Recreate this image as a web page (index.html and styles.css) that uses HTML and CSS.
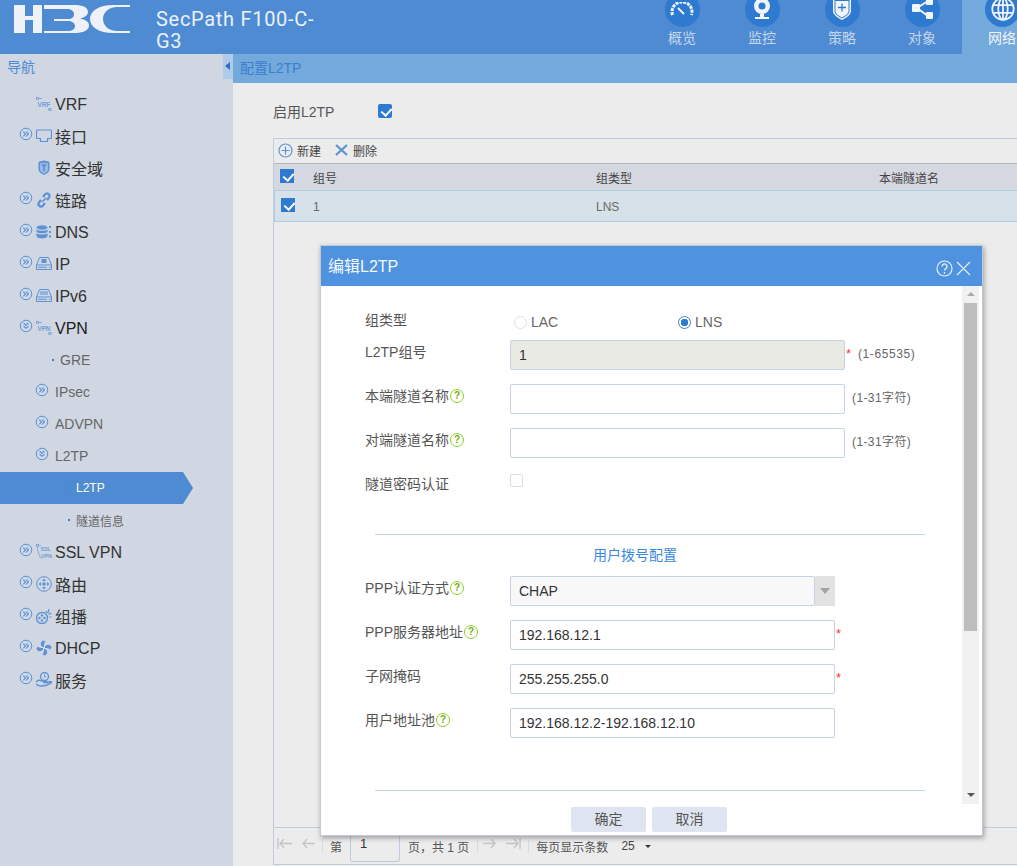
FILE: index.html
```html
<!DOCTYPE html>
<html lang="zh">
<head>
<meta charset="utf-8">
<title>编辑L2TP</title>
<link rel="stylesheet" href="styles.css">
</head>
<body>
<svg class="sprites" width="0" height="0" aria-hidden="true">
  <defs>
    <symbol id="chev-r" viewBox="0 0 14 14"><circle cx="7" cy="7" r="5.8" fill="none" stroke="#5d93d6"/><path d="M4.300 4.600 6.600 7 4.300 9.400M7.200 4.600 9.500 7 7.200 9.400" fill="none" stroke="#5d93d6" stroke-width="1.100"/></symbol>
    <symbol id="chev-d" viewBox="0 0 14 14"><circle cx="7" cy="7" r="5.8" fill="none" stroke="#5d93d6"/><path d="M4.600 4 7 6.300 9.400 4M4.600 7 7 9.300 9.400 7" fill="none" stroke="#5d93d6" stroke-width="1.100"/></symbol>
  </defs>
</svg>
<div class="app">
  <header class="topbar">
    <div class="logo">
      <svg width="116" height="28" viewBox="0 0 116 28"><g fill="#eef2f8">
        <path d="M0 0h11v11h8V0h9v28h-9V15h-8v13H0z"/>
        <path d="M30 0h30c9 0 14 2.500 14 7 0 3-3 5.500-8 6.500 5 1 9 3 9 7 0 5-6 7.500-15 7.500H30v-2h24c4 0 7-2 7-5s-3-5-7-5H40v-2h14c4 0 6-2 6-5s-3-5-7-5H30z"/>
        <path d="M116 0v2h-13c-8 0-14 5-14 12s6 12 14 12h13v2H99c-14 0-23-6-23-14S85 0 99 0z"/>
      </g></svg>
    </div>
    <div class="product"><span class="product-line">SecPath F100-C-</span><span class="product-line">G3</span></div>
    <nav class="mainnav">
      <div class="navitem"><span class="navcircle"><svg width="24" height="14" viewBox="0 0 24 14"><path d="M2.500 13a10 10 0 1 1 19 0" fill="none" stroke="#f1f5fa" stroke-width="3" stroke-dasharray="3 1"/><path d="M8 6l6 6" stroke="#f1f5fa" stroke-width="2"/></svg></span><span class="navlabel">概览</span></div>
      <div class="navitem"><span class="navcircle"><svg width="18" height="21" viewBox="0 0 18 21"><circle cx="9" cy="7" r="8" fill="#f1f5fa"/><circle cx="9" cy="7" r="3.500" fill="#2f7ad1"/><path d="M7 15h4v3H7zM2 18h14v2H2z" fill="#f1f5fa"/></svg></span><span class="navlabel">监控</span></div>
      <div class="navitem"><span class="navcircle"><svg width="18" height="23" viewBox="0 0 18 23"><path d="M0 0h18v13c0 4-5 7-9 9-4-2-9-5-9-9z" fill="#f1f5fa"/><path d="M1.500 2h15v11c0 3-4 5.500-7.500 7.500C5.500 18.500 1.500 16 1.500 13z" fill="#2f7ad1"/><path d="M2.500 3h13v10c0 3-3 4.500-6.500 6.500C5.500 17.500 2.500 16 2.500 13z" fill="#f1f5fa"/><path d="M9 5.500v8M5 9.500h8" stroke="#2f7ad1" stroke-width="1.300"/></svg></span><span class="navlabel">策略</span></div>
      <div class="navitem"><span class="navcircle"><svg width="21" height="22" viewBox="0 0 21 22"><path d="M16 3 5 10l11 8" fill="none" stroke="#f1f5fa" stroke-width="2"/><rect x="0" y="6" width="8" height="8" rx="1" fill="#f1f5fa"/><rect x="14" y="0" width="7" height="7" rx="1" fill="#f1f5fa"/><rect x="14" y="14" width="7" height="7" rx="1" fill="#f1f5fa"/></svg></span><span class="navlabel">对象</span></div>
      <div class="navitem navitem-active"><span class="navcircle"><svg width="24" height="24" viewBox="0 0 28 28"><g fill="none" stroke="#f1f5fa" stroke-width="2"><circle cx="14" cy="14" r="12.500"/><ellipse cx="14" cy="14" rx="5.500" ry="12.500"/><path d="M3 9.500h22M3 18.500h22M14 2v24"/></g></svg></span><span class="navlabel">网络</span></div>
    </nav>
  </header>
  <div class="body">
    <aside class="sidebar">
      <div class="sidehead"><span class="sidetitle">导航</span><span class="collapse"></span></div>
      <ul class="tree">
        <li class="row"><span class="exp"></span><svg class="ico" width="16" height="14" viewBox="0 0 16 14"><g fill="none" stroke="#6f9fd8" stroke-width=".8"><rect x="0.500" y="0.500" width="2" height="2"/><path d="M2.500 1.500H6M12 12.500h1"/><rect x="13" y="11.500" width="2" height="2"/></g><text class="icotext" x="1.500" y="10">VRF</text></svg><span class="lvl1">VRF</span></li>
        <li class="row"><svg class="exp" viewBox="0 0 14 14"><use href="#chev-r"/></svg><svg class="ico" width="16" height="14" viewBox="0 0 16 14"><path d="M1.500 1h13a1 1 0 0 1 1 1v6.500a1 1 0 0 1-1 1H11.500v3H4.500v-3H1.500a1 1 0 0 1-1-1V2a1 1 0 0 1 1-1z" fill="none" stroke="#5d93d6" stroke-width="1.200"/></svg><span class="lvl1 cn">接口</span></li>
        <li class="row"><span class="exp"></span><svg class="ico" width="16" height="16" viewBox="0 0 16 16"><path d="M2.500 2q5.500-3 11 0v7c0 3-3 5-5.500 6-2.500-1-5.500-3-5.500-6z" fill="#5d93d6"/><path d="M4 3.500q4-1.500 8 0v5.500c0 2-2 3.500-4 4.500-2-1-4-2.500-4-4.500z" fill="#9cbde6"/><path d="M5.500 4.500h5v1.300H8.700v5.500H7.300V5.800H5.500z" fill="#4f85c9"/></svg><span class="lvl1 cn">安全域</span></li>
        <li class="row"><svg class="exp" viewBox="0 0 14 14"><use href="#chev-r"/></svg><svg class="ico" width="16" height="16" viewBox="0 0 16 16"><g fill="none" stroke="#5d93d6" stroke-width="2.200"><path d="M7 5l2-2.500a2.500 2.500 0 0 1 4 3L11 8"/><path d="M9 11l-2 2.500a2.500 2.500 0 0 1-4-3L5 8"/><path d="M6 10l4-4" stroke-width="1.600"/></g></svg><span class="lvl1 cn">链路</span></li>
        <li class="row"><svg class="exp" viewBox="0 0 14 14"><use href="#chev-r"/></svg><svg class="ico" width="16" height="14" viewBox="0 0 16 14"><g fill="#5d93d6"><ellipse cx="6" cy="2.500" rx="5.500" ry="2.200"/><path d="M.5 4.300c2 2 9 2 11 0v2.400c-2 2-9 2-11 0zM.5 8c2 2 9 2 11 0v3.500c-2 2.500-9 2.500-11 0z"/><path d="M13 1h2v2h-2zM13 6h2v2h-2zM13 10.500h2v2h-2z"/></g></svg><span class="lvl1">DNS</span></li>
        <li class="row"><svg class="exp" viewBox="0 0 14 14"><use href="#chev-r"/></svg><svg class="ico" width="16" height="13" viewBox="0 0 16 13"><path d="M3.500.5h9L15.500 8v4.500H.5V8z" fill="none" stroke="#5d93d6"/><path d="M.5 8h15M2 10.300h9M13 10.300h1.500" stroke="#5d93d6"/><path d="M5.500 2h5v4h-5z" fill="#5d93d6"/></svg><span class="lvl1">IP</span></li>
        <li class="row"><svg class="exp" viewBox="0 0 14 14"><use href="#chev-r"/></svg><svg class="ico" width="16" height="13" viewBox="0 0 16 13"><path d="M3.500.5h9L15.500 8v4.500H.5V8z" fill="none" stroke="#5d93d6"/><path d="M.5 8h15M2 10.300h9M13 10.300h1.500" stroke="#5d93d6"/><path d="M4 2h8v4H4z" fill="#8fb4e2"/></svg><span class="lvl1">IPv6</span></li>
        <li class="row"><svg class="exp" viewBox="0 0 14 14"><use href="#chev-d"/></svg><svg class="ico" width="16" height="14" viewBox="0 0 16 14"><g fill="none" stroke="#6f9fd8" stroke-width=".8"><rect x="0.500" y="0.500" width="2" height="2"/><path d="M2.500 1.500H6M12 12.500h1"/><rect x="13" y="11.500" width="2" height="2"/></g><text class="icotext" x="1.500" y="10">VPN</text></svg><span class="lvl1 dark">VPN</span></li>
        <li class="row sub"><span class="dot"></span><span class="lvl2">GRE</span></li>
        <li class="row sub2"><svg class="exp" viewBox="0 0 14 14"><use href="#chev-r"/></svg><span class="lvl2">IPsec</span></li>
        <li class="row sub2"><svg class="exp" viewBox="0 0 14 14"><use href="#chev-r"/></svg><span class="lvl2">ADVPN</span></li>
        <li class="row sub2"><svg class="exp" viewBox="0 0 14 14"><use href="#chev-d"/></svg><span class="lvl2">L2TP</span></li>
        <li class="row sub3 current"><span class="dot"></span><span class="lvl3">L2TP</span></li>
        <li class="row sub3"><span class="dot"></span><span class="lvl3">隧道信息</span></li>
        <li class="row"><svg class="exp" viewBox="0 0 14 14"><use href="#chev-r"/></svg><svg class="ico" width="16" height="16" viewBox="0 0 16 16"><g fill="none" stroke="#6f9fd8" stroke-width=".8"><rect x="0.500" y="0.500" width="2" height="2"/><path d="M2.500 1.500H5M1.500 3v3l3 8h1"/></g><text class="icotext icotext-small" x="4.500" y="7">SSL</text><text class="icotext icotext-small" x="5" y="13.500">VPN</text></svg><span class="lvl1">SSL VPN</span></li>
        <li class="row"><svg class="exp" viewBox="0 0 14 14"><use href="#chev-r"/></svg><svg class="ico" width="16" height="16" viewBox="0 0 16 16"><circle cx="8" cy="8" r="7.300" fill="none" stroke="#5d93d6"/><path d="M8 2.500 10 5H6zM8 13.500 6 11h4zM2.500 8 5 6v4zM13.500 8 11 10V6z" fill="#5d93d6"/><circle cx="8" cy="8" r="1.800" fill="#5d93d6"/></svg><span class="lvl1 cn">路由</span></li>
        <li class="row"><svg class="exp" viewBox="0 0 14 14"><use href="#chev-r"/></svg><svg class="ico" width="16" height="16" viewBox="0 0 16 16"><circle cx="6" cy="10" r="5.500" fill="none" stroke="#5d93d6" stroke-width="1.400"/><g fill="#5d93d6"><circle cx="6" cy="7.500" r="1.200"/><circle cx="6" cy="12.500" r="1.200"/><circle cx="3.500" cy="10" r="1.200"/><circle cx="8.500" cy="10" r="1.200"/></g><path d="M10 3l1 2M13 1l-1 4M15.500 5l-3 1.500M15.500 9h-2" stroke="#5d93d6" stroke-width="1.200"/></svg><span class="lvl1 cn">组播</span></li>
        <li class="row"><svg class="exp" viewBox="0 0 14 14"><use href="#chev-r"/></svg><svg class="ico" width="16" height="16" viewBox="0 0 16 16"><path d="M7 7C4 6 4 2 7 .5l2.500 1C8 3 8 5 8 7zM9 7c1-3 5-3 6.500 0l-1 2.500C13 8 11 8 9 8zM9 9c3 1 3 5 0 6.500l-2.500-1C8 13 8 11 8 9zM7 9c-1 3-5 3-6.500 0l1-2.500C3 8 5 8 7 8z" fill="#5d93d6"/></svg><span class="lvl1">DHCP</span></li>
        <li class="row"><svg class="exp" viewBox="0 0 14 14"><use href="#chev-r"/></svg><svg class="ico" width="16" height="15" viewBox="0 0 16 15"><circle cx="8.500" cy="4.500" r="4" fill="none" stroke="#5d93d6" stroke-width="1.300"/><path d="M8.500 2.500v2.200h1.500" fill="none" stroke="#5d93d6"/><path d="M0 10c2-2 4-2 6-1h4c1 0 1 1.500 0 1.500H7M0 12c4 3 9 3 16-2-2-.5-4 0-6 1" fill="none" stroke="#5d93d6" stroke-width="1.500"/></svg><span class="lvl1 cn">服务</span></li>
      </ul>
    </aside>
    <main class="main">
      <div class="crumb">配置L2TP</div>
      <div class="content">
        <div class="enable"><span class="enable-label">启用L2TP</span><span class="check"></span></div>
        <section class="grid">
          <div class="toolbar">
            <span class="tool"><svg width="15" height="15" viewBox="0 0 15 15"><circle cx="7.500" cy="7.500" r="6.500" fill="none" stroke="#5d93d6" stroke-width="1.200"/><path d="M7.500 3.500v8M3.500 7.500h8" stroke="#5d93d6" stroke-width="1.200"/></svg>新建</span>
            <span class="tool"><svg width="15" height="14" viewBox="0 0 15 14"><path d="M2 2l11 10M13 2 2 12" stroke="#5d93d6" stroke-width="2.300"/></svg>删除</span>
          </div>
          <div class="grid-head">
            <span class="cell-check"><span class="check check-square"></span></span>
            <span class="col1">组号</span><span class="col2">组类型</span><span class="col3">本端隧道名</span>
          </div>
          <div class="grid-row">
            <span class="cell-check"><span class="check check-square"></span></span>
            <span class="col1">1</span><span class="col2">LNS</span><span class="col3"></span>
          </div>
          <div class="grid-fill"></div>
          <div class="pager">
            <svg class="pg-ico" width="16" height="11" viewBox="0 0 16 11"><path d="M1 0v11M15 5.500H3M7 1 3 5.500 7 10" fill="none" stroke="#c4c4c4" stroke-width="1.300"/></svg>
            <svg class="pg-ico" width="14" height="11" viewBox="0 0 14 11"><path d="M14 5.500H2M6 1 2 5.500 6 10" fill="none" stroke="#c4c4c4" stroke-width="1.300"/></svg>
            <span class="pg-sep"></span>
            <span class="pg-text">第</span>
            <span class="pg-input">1</span>
            <span class="pg-text pg-total">页，共 1 页</span>
            <span class="pg-sep"></span>
            <svg class="pg-ico pg-next" width="14" height="11" viewBox="0 0 14 11"><path d="M0 5.500H12M8 1l4 4.500L8 10" fill="none" stroke="#c4c4c4" stroke-width="1.300"/></svg>
            <svg class="pg-ico" width="16" height="11" viewBox="0 0 16 11"><path d="M15 0v11M1 5.500H13M9 1l4 4.500L9 10" fill="none" stroke="#c4c4c4" stroke-width="1.300"/></svg>
            <span class="pg-sep"></span>
            <span class="pg-text">每页显示条数</span>
            <span class="pg-size">25</span>
            <span class="pg-caret"></span>
          </div>
        </section>
      </div>
    </main>
  </div>
</div>

<div class="dialog">
  <div class="dlg-head">
    <span>编辑L2TP</span>
    <span class="dlg-icons">
      <svg width="17" height="17" viewBox="0 0 17 17"><circle cx="8.500" cy="8.500" r="7.500" fill="none" stroke="#e9f1fb" stroke-width="1.200"/><path d="M6 6.500a2.500 2.500 0 1 1 3.800 2.100c-.9.500-1.300 1-1.300 2" fill="none" stroke="#e9f1fb" stroke-width="1.300"/><circle cx="8.500" cy="12.800" r=".9" fill="#e9f1fb"/></svg>
      <svg width="15" height="15" viewBox="0 0 15 15"><path d="M1 1l13 13M14 1 1 14" stroke="#e9f1fb" stroke-width="1.100"/></svg>
    </span>
  </div>
  <div class="dlg-body">
    <div class="dlg-form">
      <div class="frow frow-radio"><label class="flabel">组类型</label>
        <div class="radios"><span class="radio-item radio-lac"><span class="radio"></span>LAC</span><span class="radio-item"><span class="radio radio-on"></span>LNS</span></div>
      </div>
      <div class="frow"><label class="flabel">L2TP组号</label><span class="input input-wide input-disabled">1</span><span class="req">*</span><span class="hint hint-req">(1-65535)</span></div>
      <div class="frow"><label class="flabel">本端隧道名称<span class="help">?</span></label><span class="input input-wide"></span><span class="hint">(1-31字符)</span></div>
      <div class="frow"><label class="flabel">对端隧道名称<span class="help">?</span></label><span class="input input-wide"></span><span class="hint">(1-31字符)</span></div>
      <div class="frow frow-check"><label class="flabel">隧道密码认证</label><span class="check-off"></span></div>
      <hr class="rule">
      <div class="section-title">用户拨号配置</div>
      <div class="frow"><label class="flabel">PPP认证方式<span class="help">?</span></label><span class="input input-select">CHAP</span><span class="select-btn"><span class="select-caret"></span></span></div>
      <div class="frow"><label class="flabel">PPP服务器地址<span class="help">?</span></label><span class="input">192.168.12.1</span><span class="req">*</span></div>
      <div class="frow"><label class="flabel">子网掩码</label><span class="input">255.255.255.0</span><span class="req">*</span></div>
      <div class="frow"><label class="flabel">用户地址池<span class="help">?</span></label><span class="input">192.168.12.2-192.168.12.10</span></div>
      <hr class="rule rule-bottom">
    </div>
    <div class="scrollbar">
      <span class="sb-arrow sb-up"></span>
      <span class="sb-thumb"></span>
      <span class="sb-arrow sb-down"></span>
    </div>
  </div>
  <div class="dlg-foot"><span class="btn">确定</span><span class="btn">取消</span></div>
</div>
</body>
</html>
```
FILE: styles.css
```css
* { box-sizing: border-box; }
html, body { margin: 0; padding: 0; height: 100%; overflow: hidden; }
body { font-family: "Liberation Sans", "Noto Sans CJK SC", sans-serif; font-size: 13px; color: #555; background: #ececec; }
.sprites { position: absolute; }
.app { width: 1017px; height: 866px; display: flex; flex-direction: column; }

.topbar { height: 54px; flex: none; display: flex; background: #4f8bd2; color: #fff; overflow: hidden; }
.logo { width: 156px; padding: 5px 0 0 14px; }
.product { width: 190px; padding-top: 8px; font-family: "Roboto", "Open Sans", sans-serif; font-size: 20px; line-height: 22px; letter-spacing: .7px; color: #eaf1fa; white-space: nowrap; }
.product-line { display: block; height: 22px; }
.mainnav { margin-left: auto; display: flex; }
.navitem { width: 80px; display: flex; flex-direction: column; align-items: center; }
.navitem-active { width: 55px; background: #74a9dc; align-items: flex-start; padding-left: 23px; }
.navitem-active .navlabel { margin-left: 3px; color: #f0f5fb; }
.navcircle { width: 35px; height: 35px; margin-top: -8px; flex: none; border-radius: 50%; background: #2f7ad1; display: flex; align-items: center; justify-content: center; padding-bottom: 1px; }
.navlabel { margin-top: 1px; font-size: 14px; line-height: 20px; color: #c4d6ee; white-space: nowrap; }

.body { flex: 1; display: flex; min-height: 0; }
.sidebar { width: 233px; flex: none; background: #d0d7e2; }
.sidehead { height: 29px; display: flex; justify-content: space-between; align-items: flex-start; padding-left: 7px; font-size: 14px; color: #4b8bd6; }
.sidetitle { line-height: 26px; }
.collapse { width: 10px; height: 25px; background: #b0cbe9; position: relative; }
.collapse::after { content: ""; position: absolute; left: 2px; top: 8px; border: 4px solid transparent; border-left: 0; border-right: 5px solid #2f6fc0; }
.tree { list-style: none; margin: 0; padding: 5px 0 0; }
.row { height: 32px; display: flex; align-items: center; padding: 2px 0 0 19px; font-size: 16px; color: #333; position: relative; }
.exp { width: 14px; height: 14px; flex: none; margin-top: -6px; }
.ico { margin-left: 3px; flex: none; width: 16px; margin-top: -3px; }
.icotext { font-size: 6.500px; font-weight: bold; letter-spacing: -.2px; fill: #6f9fd8; }
.icotext-small { font-size: 5.500px; }
.lvl1 { margin-left: 3px; white-space: nowrap; }
.cn { margin-top: -2px; }
.dark { color: #222; }
.row.sub { padding: 0 0 0 52px; }
.row.sub2 { padding: 0 0 0 35px; }
.sub2 .exp { margin-top: -4px; }
.row.sub3 { padding: 0 0 0 68px; }
.dot { width: 2px; height: 2px; background: #3f82d2; flex: none; }
.lvl2 { margin-left: 6px; font-size: 14px; color: #666; }
.lvl3 { margin-left: 6px; font-size: 12px; color: #666; }
.current { background: #4f8bd2; width: 193px; clip-path: polygon(0 0, 183px 0, 193px 50%, 183px 100%, 0 100%); }
.current .lvl3 { color: #fff; }

.main { flex: 1; min-width: 0; display: flex; flex-direction: column; }
.crumb { height: 29px; flex: none; padding-left: 7px; line-height: 29px; font-size: 14px; color: #3a7fd0; background: #74a9dc; }
.content { flex: 1; padding: 0 0 0 40px; display: flex; flex-direction: column; min-height: 0; }
.enable { height: 55px; flex: none; display: flex; align-items: center; }
.enable-label { width: 105px; font-size: 14px; color: #555; }
.check { display: inline-block; width: 14px; height: 14px; border-radius: 2px; background: #2f7ad1; position: relative; }
.check-square { border-radius: 0; margin-top: -2px; }
.grid-row .check-square { margin-top: -4px; }
.check::after { content: ""; position: absolute; left: 4.500px; top: 2px; width: 5px; height: 8px; border: solid #fff; border-width: 0 2px 2px 0; transform: rotate(42deg); }

.grid { flex: 1; margin-bottom: 1px; display: flex; flex-direction: column; border: 1px solid #bfcbe0; border-right: 0; min-height: 0; }
.toolbar { height: 24px; flex: none; display: flex; align-items: center; gap: 13px; padding: 0 0 2px 4px; font-size: 12px; color: #444; }
.tool { display: flex; align-items: center; gap: 4px; }
.grid-head, .grid-row { flex: none; display: flex; align-items: center; font-size: 12px; }
.grid-head { height: 27px; background: #d5d8e0; color: #444; border-top: 1px solid #b4b4b4; }
.grid-row { height: 32px; padding-top: 2px; background: #d6e1e9; border: 1px solid #b0cbe3; border-right: 0; color: #6a6a62; }
.cell-check { width: 39px; padding-left: 6px; display: flex; flex: none; }
.grid-row .cell-check { width: 38px; }
.col1 { width: 283px; flex: none; }
.col2 { width: 283px; flex: none; }
.col3 { flex: 1; }
.grid-fill { flex: 1; }
.pager { height: 37px; flex: none; display: flex; align-items: center; padding-left: 3px; border-top: 1px solid #bfcbe0; font-size: 12px; color: #555; }
.pg-ico { margin: -6px 8px 0 0; flex: none; }
.pg-next { margin-left: -2px; }
.pg-sep { width: 1px; height: 14px; background: #dcdcdc; margin: 0 7px 0 -1px; flex: none; }
.pg-text { white-space: nowrap; }
.pg-input { width: 50px; height: 33px; margin: -1px 0 0 8px; padding: 0 0 0 9px; line-height: 30px; border: 1px solid #bfcbe0; border-top: 0; border-radius: 0 0 3px 3px; font-size: 13px; color: #333; }
.pg-total { margin-left: 8px; margin-right: 9px; }
.pg-size { margin-left: 13px; color: #444; }
.pg-caret { margin-left: 10px; border: 3px solid transparent; border-top: 3px solid #333; border-bottom: 0; }

.dialog { position: absolute; left: 320px; top: 245px; width: 663px; height: 591px; display: flex; flex-direction: column; background: #fff; border: 1px solid #c5c9d2; box-shadow: 1px 2px 5px rgba(60,60,70,.45); }
.dlg-head { height: 40px; flex: none; display: flex; justify-content: space-between; align-items: center; padding: 0 11px 2px 7px; background: #4f92e0; color: #f4f8fd; font-size: 16px; }
.dlg-icons { display: flex; align-items: center; gap: 3px; margin-top: 6px; }
.dlg-body { flex: 1; display: flex; min-height: 0; position: relative; }
.dlg-form { flex: 1; padding: 0 38px 0 44px; min-width: 0; }
.frow { height: 44px; display: flex; align-items: flex-start; }
.frow-radio { height: 54px; padding-top: 22px; }
.flabel { width: 145px; flex: none; font-size: 14px; line-height: 18px; margin-top: 3px; color: #555; display: flex; align-items: center; white-space: nowrap; }
.radios { display: flex; font-size: 14px; color: #666; margin-top: 5px; }
.radio-item { display: flex; align-items: center; white-space: nowrap; line-height: 18px; }
.radio-lac { width: 164px; margin-left: 4px; }
.radio { width: 13px; height: 13px; margin-right: 4px; border-radius: 50%; border: 1px solid #e0e0e0; background: #fff; }
.radio-on { border-color: #3a7fd0; background: radial-gradient(circle, #2f7ad1 0 3.500px, #fff 4px); }
.input { width: 325px; height: 30px; flex: none; padding-left: 8px; border: 1px solid #c4d3e6; border-radius: 2px; font-size: 14px; line-height: 28px; color: #333; background: #fff; }
.input-wide { width: 335px; }
.input-disabled { background: #eaeae4; }
.req { width: 5px; margin-left: 1px; color: #f33; font-size: 13px; line-height: 28px; flex: none; }
.hint { margin-left: 7px; font-size: 12px; letter-spacing: .4px; line-height: 28px; color: #666; white-space: nowrap; }
.hint-req { letter-spacing: .6px; }
.help { width: 14px; height: 14px; margin-left: 1px; flex: none; border: 1.500px solid #8cd01e; border-radius: 50%; color: #6fb30a; font-size: 10px; font-weight: bold; line-height: 11px; text-align: center; }
.frow-check { height: 62px; }
.check-off { width: 13px; height: 13px; margin-top: 2px; border: 1px solid #dedede; border-radius: 2px; }
.rule { height: 1px; margin: 0 0 0 10px; border: 0; background: #c4d3e6; width: 550px; }
.section-title { height: 41px; padding: 11px 0 0 228px; font-size: 14px; line-height: 18px; color: #3a88dc; white-space: nowrap; }
.rule-bottom { margin-top: 38px; }
.input-select { background: #f8f8f8; width: 305px; }
.select-btn { width: 20px; height: 30px; background: #e2e2e2; display: flex; align-items: center; justify-content: center; flex: none; }
.select-caret { border: 5px solid transparent; border-top: 6px solid #a4a4a4; border-bottom: 0; }
.scrollbar { width: 17px; height: 518px; margin-right: 3px; flex: none; background: #f1f1f1; display: flex; flex-direction: column; align-items: center; }
.sb-arrow { flex: none; border: 4px solid transparent; }
.sb-up { margin-top: 6px; border-top: 0; border-bottom: 4px solid #aaa; }
.sb-thumb { width: 13px; height: 328px; margin-top: 7px; background: #bdbdbd; }
.sb-down { margin-top: auto; margin-bottom: 7px; border-bottom: 0; border-top: 4px solid #555; }
.dlg-foot { height: 31px; flex: none; display: flex; gap: 6px; padding: 3px 0 0 250px; align-items: flex-start; }
.btn { width: 75px; height: 25px; background: #dfe5f0; border-radius: 2px; font-size: 14px; line-height: 25px; color: #555; text-align: center; }
```
